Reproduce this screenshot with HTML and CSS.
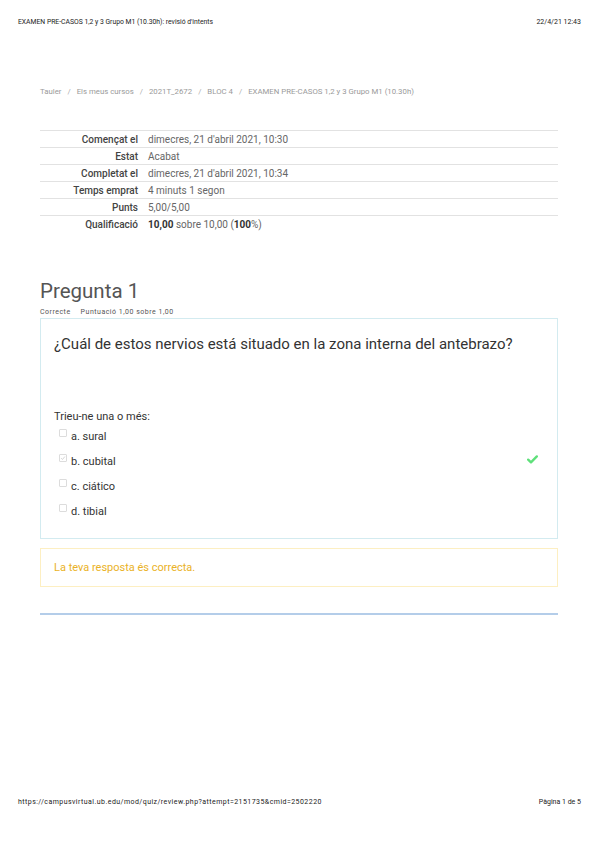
FILE: index.html
```html
<!DOCTYPE html>
<html>
<head>
<meta charset="utf-8">
<link rel="stylesheet" href="styles.css">
</head>
<body>
<div class="page">
  <div class="printhead">
    <span class="title">EXAMEN PRE-CASOS 1,2 y 3 Grupo M1 (10.30h): revisió d'intents</span>
    <span>22/4/21 12:43</span>
  </div>
  <main class="content">
    <nav class="crumbs">
      <span>Tauler</span><span class="sep">/</span>
      <span>Els meus cursos</span><span class="sep">/</span>
      <span>2021T_2672</span><span class="sep">/</span>
      <span>BLOC 4</span><span class="sep">/</span>
      <span>EXAMEN PRE-CASOS 1,2 y 3 Grupo M1 (10.30h)</span>
    </nav>
    <table class="summary">
      <tr><th>Començat el</th><td>dimecres, 21 d'abril 2021, 10:30</td></tr>
      <tr><th>Estat</th><td>Acabat</td></tr>
      <tr><th>Completat el</th><td>dimecres, 21 d'abril 2021, 10:34</td></tr>
      <tr><th>Temps emprat</th><td>4 minuts 1 segon</td></tr>
      <tr><th>Punts</th><td>5,00/5,00</td></tr>
      <tr><th>Qualificació</th><td><b>10,00</b> sobre 10,00 (<b>100</b>%)</td></tr>
    </table>
    <section class="question">
      <h2 class="qtitle">Pregunta 1</h2>
      <div class="qinfo"><span>Correcte</span><span>Puntuació 1,00 sobre 1,00</span></div>
      <div class="qbox">
        <p class="qtext">¿Cuál de estos nervios está situado en la zona interna del antebrazo?</p>
        <p class="prompt">Trieu-ne una o més:</p>
        <div class="answers">
          <div class="opt"><span class="cb"></span><span>a. sural</span></div>
          <div class="opt"><span class="cb"><svg viewBox="0 0 8 8" width="6" height="6"><path d="M1.5 4.2 L3.3 6 L6.5 2" fill="none" stroke="#c8c8c8" stroke-width="1"/></svg></span><span>b. cubital</span>
            <svg class="tick" viewBox="0 0 12 10" width="11" height="9"><path d="M1.2 5.2 L4.3 8.2 L10.8 1.6" fill="none" stroke="#5ee07a" stroke-width="2.6" stroke-linecap="round" stroke-linejoin="round"/></svg>
          </div>
          <div class="opt"><span class="cb"></span><span>c. ciático</span></div>
          <div class="opt"><span class="cb"></span><span>d. tibial</span></div>
        </div>
      </div>
      <div class="feedback">La teva resposta és correcta.</div>
      <div class="rule"></div>
    </section>
  </main>
  <div class="printfoot">
    <span class="url">https://campusvirtual.ub.edu/mod/quiz/review.php?attempt=2151735&amp;cmid=2502220</span>
    <span>Pàgina 1 de 5</span>
  </div>
</div>
</body>
</html>
```
FILE: styles.css
```css
html, body {
  margin: 0;
  padding: 0;
  background: #fff;
}
body {
  font-family: Roboto, "Liberation Sans", Arial, sans-serif;
  color: #333;
}
.page {
  width: 599px;
  height: 848px;
  display: flex;
  flex-direction: column;
  box-sizing: border-box;
}
.printhead, .printfoot {
  display: flex;
  justify-content: space-between;
  padding: 0 18px;
  font-size: 7px;
  color: #222;
}
.printhead {
  padding-top: 18px;
  height: 8px;
}
.printhead .title {
  font-size: 6.8px;
}
.printfoot {
  margin-top: auto;
  margin-bottom: 42px;
}
.printfoot .url {
  letter-spacing: 0.45px;
}
.content {
  padding: 0 41px 0 40px;
}
.crumbs {
  margin-top: 61px;
  font-size: 7.8px;
  color: #9a9a9a;
  display: flex;
  gap: 6px;
}
.crumbs .sep { color: #aaa; }
.summary {
  margin-top: 34px;
  width: 100%;
  border-collapse: collapse;
  font-size: 10px;
}
.summary tr {
  border-top: 1px solid #e2e2e2;
  height: 17px;
}
.summary th {
  width: 98px;
  text-align: right;
  font-weight: 500;
  color: #444;
  padding: 0 10px 0 0;
  white-space: nowrap;
}
.summary td {
  color: #666;
  padding: 0;
}
.summary td b { color: #333; font-weight: 700; }
.question {
  margin-top: 46px;
}
.qtitle {
  margin: 0;
  font-size: 20.5px;
  font-weight: 400;
  color: #555;
  line-height: 24px;
}
.qinfo {
  font-size: 7px;
  color: #555;
  display: flex;
  gap: 10px;
  margin-top: 5px;
  line-height: 9px;
  letter-spacing: 0.5px;
}
.qbox {
  margin-top: 1px;
  border: 1px solid #d3ebf0;
  padding: 14px 13px 14px 13px;
}
.qtext {
  margin: 1px 0 0;
  font-size: 15px;
  color: #333;
  line-height: 20px;
}
.prompt {
  margin: 56px 0 0;
  font-size: 11px;
  line-height: 14px;
  color: #333;
}
.answers {
  display: flex;
  flex-direction: column;
  padding-left: 5px;
}
.opt {
  display: flex;
  align-items: center;
  gap: 4px;
  height: 25px;
  font-size: 11px;
  color: #333;
  position: relative;
}
.cb {
  width: 6px;
  height: 6px;
  border: 1px solid #dcdcdc;
  border-radius: 1px;
  display: flex;
  align-items: center;
  justify-content: center;
  margin-top: -6px;
}
.cb svg { display: block; }
.tick {
  position: absolute;
  right: 6px;
  top: 6px;
}
.feedback {
  margin-top: 9px;
  border: 1px solid #fdefc2;
  padding: 11px 13px 10px;
  height: 16px;
  font-size: 11px;
  color: #eab226;
  line-height: 16px;
}
.rule {
  margin-top: 26px;
  height: 2px;
  background: #b4cde9;
}
```
